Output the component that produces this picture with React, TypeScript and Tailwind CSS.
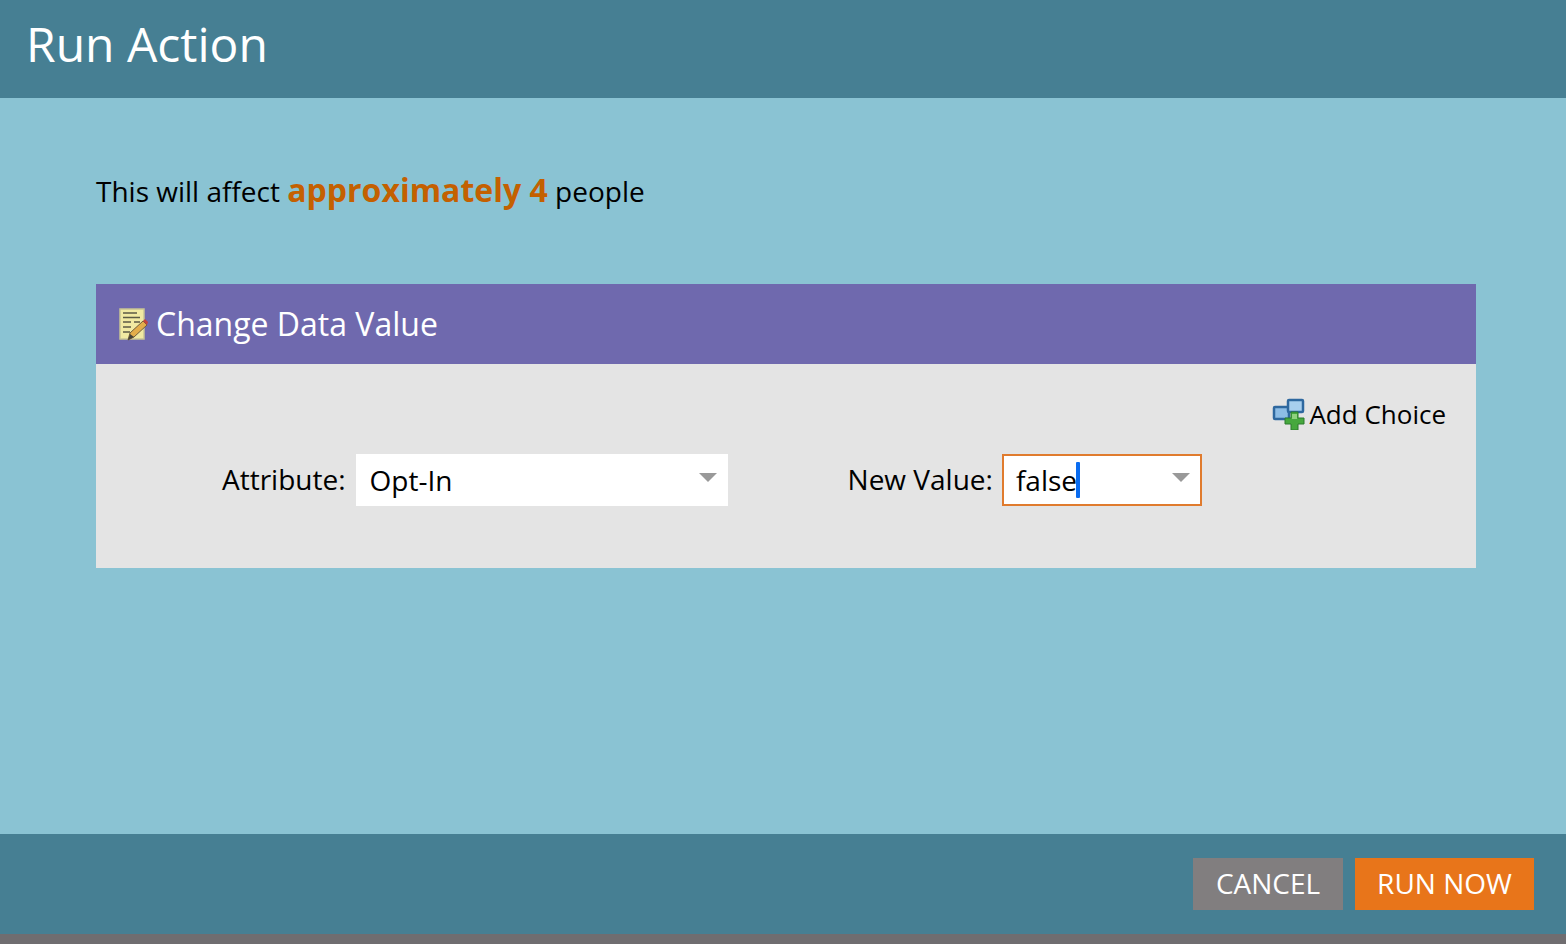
const font = "font-['Open_Sans',sans-serif]"

function NotesIcon() {
  return (
    <svg width="30" height="36" viewBox="0 0 30 36" className="shrink-0 blur-[0.4px]">
      <rect x="2" y="3" width="24" height="30" fill="#f1e9a2" stroke="#c8c494" strokeWidth="1.5" />
      <path d="M5 7h14M5 11.5h17M5 16h8M16 16h6M5 21h8M5 26h7" stroke="#5c5a45" strokeWidth="1.6" />
      <path d="M10 34l2-7 13-12 4 4-13 12z" fill="#e3ad4a" stroke="#6f5d3c" strokeWidth="1" />
      <path d="M25 15l2-2 3 3-1 3z" fill="#c4453d" />
      <path d="M10 34l2-6 4 3z" fill="#45423a" />
    </svg>
  )
}

function AddChoiceIcon() {
  return (
    <svg width="33" height="32" viewBox="0 0 33 32" className="shrink-0 blur-[0.4px]">
      <rect x="2" y="9" width="15" height="12" rx="1" fill="#8dbde6" stroke="#2e689f" strokeWidth="2.5" />
      <rect x="16" y="2" width="15" height="12" rx="1" fill="#a8cfee" stroke="#2e689f" strokeWidth="2.5" />
      <path d="M19 14h7v6h6v6h-6v6h-7v-6h-6v-6h6z" fill="#46a83d" stroke="#2a7a2c" strokeWidth="1" />
      <path d="M20 16h5v5h-5z" fill="#8fd27d" />
    </svg>
  )
}

function Caret() {
  return <span className="w-0 h-0 -mt-[6px] border-x-[9px] border-x-transparent border-t-[9px] border-t-[#999999]" />
}

export default function App() {
  return (
    <div className={`${font} w-[1566px] h-[944px] flex flex-col overflow-hidden bg-[#8ac3d3] text-black`}>
      <header className="h-[98px] shrink-0 bg-[#467f93] pl-[26px] pt-[11px]">
        <h1 className="text-[48px] leading-[65px] text-white">Run Action</h1>
      </header>

      <main className="flex-1 pt-[70px] px-[96px]">
        <p className="text-[28px] leading-[44px] h-[116px]">
          This will affect{' '}
          <span className="text-[32px] font-bold text-[#c46000]">approximately 4</span> people
        </p>

        <section className="w-[1380px]">
          <div className="h-[80px] bg-[#6f69ae] flex items-center pl-[22px] gap-[8px] text-white text-[32px]">
            <NotesIcon />
            <span>Change Data Value</span>
          </div>
          <div className="h-[204px] bg-[#e4e4e4] pt-[34px] pr-[30px]">
            <div className="flex justify-end items-center gap-[4px] h-[32px] text-[26px]">
              <AddChoiceIcon />
              <span>Add Choice</span>
            </div>
            <div className="flex items-center mt-[24px] text-[28px]">
              <span className="ml-[126px] mr-[10px] -mt-[2px]">Attribute:</span>
              <div className="w-[372px] h-[52px] bg-white flex items-center justify-between pl-[14px] pr-[11px]">
                <span>Opt-In</span>
                <Caret />
              </div>
              <span className="ml-[120px] mr-[9px] -mt-[2px]">New Value:</span>
              <div className="w-[200px] h-[52px] bg-white border-2 border-[#e07b2e] flex items-center justify-between pl-[12px] pr-[10px]">
                <span className="flex items-center">
                  false
                  <span className="w-[4px] h-[36px] bg-[#0a6cf0] rounded-[1px] -ml-[1px]" />
                </span>
                <Caret />
              </div>
            </div>
          </div>
        </section>
      </main>

      <footer className="h-[100px] shrink-0 bg-[#467f93] flex justify-end items-start gap-[12px] pt-[24px] pr-[32px] text-[28px] text-white">
        <button className="w-[150px] h-[52px] bg-[#817e7f] pb-[2px]">CANCEL</button>
        <button className="w-[179px] h-[52px] bg-[#e8751a] pb-[2px]">RUN NOW</button>
      </footer>
      <div className="h-[10px] shrink-0 bg-[#6f6d70]" />
    </div>
  )
}
